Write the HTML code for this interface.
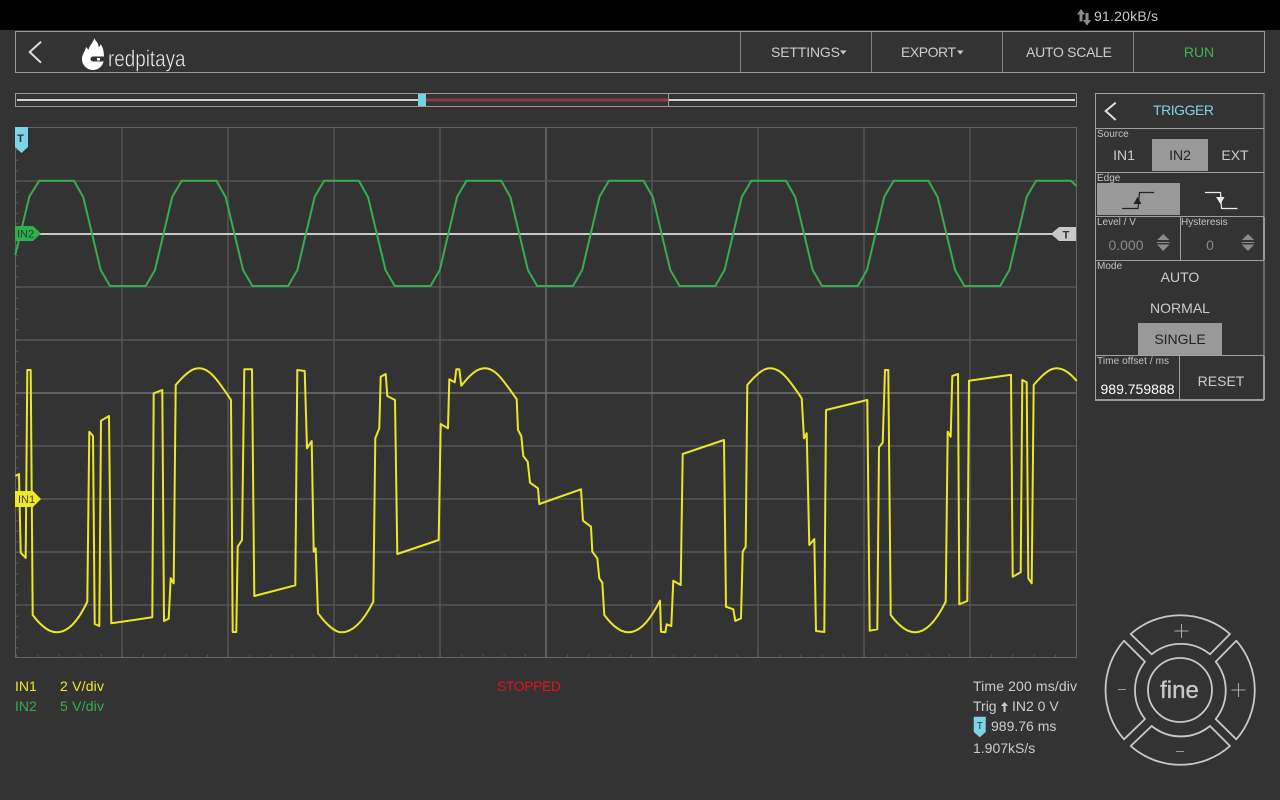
<!DOCTYPE html>
<html><head><meta charset="utf-8"><title>Oscilloscope</title>
<style>
html,body{margin:0;padding:0;background:#333;width:1280px;height:800px;overflow:hidden}
svg{display:block;font-family:"Liberation Sans",sans-serif}
text{fill:#ccc;font-size:14px}
.c{text-anchor:middle}
.l{font-size:10px;fill:#c4c4c4}
</style></head><body>
<svg width="1280" height="800" viewBox="0 0 1280 800" xmlns="http://www.w3.org/2000/svg">
<rect width="1280" height="800" fill="#333"/>
<rect width="1280" height="30" fill="#000"/>
<!-- status -->
<path d="M1081 9l4 5.500h-2.500v7h-3v-7h-2.500z" fill="#8c8c8c"/><path d="M1087 25.500l4-5.500h-2.500v-7h-3v7h-2.500z" fill="#8c8c8c"/>
<text x="1094" y="21" textLength="64" style="fill:#c8c8c8">91.20kB/s</text>
<!-- header -->
<rect x="15.500" y="31.500" width="1249" height="41" fill="none" stroke="#999"/>
<path d="M740.500 32v40M871.500 32v40M1002.500 32v40M1133.500 32v40" stroke="#808080"/>
<path d="M41 41.700L29.700 52 41 62.700" fill="none" stroke="#ddd" stroke-width="2"/>
<path d="M94.500 38C95 41 99 43 98.500 47C100 46.500 100.500 45 100.500 44C103 47 104 52 104 57C104.500 65 99 70 93 70C87 70 82 65 82 59C82 54 85 52 86 47C87 48 88 49 88.500 50C89 46 93 43 94.500 38Z" fill="#fff"/>
<path d="M93 56.500h12v5h-12a2.500 2.500 0 0 1 0-5z" fill="#333"/><rect x="97" y="58" width="3" height="2.500" fill="#fff"/>
<text transform="translate(108 66.700) scale(.82 1)" x="0" y="0" style="font-size:23px;fill:#eee;stroke:#333;stroke-width:.5px">redpitaya</text>
<text x="771" y="57" textLength="69">SETTINGS</text><path d="M840 50.500h6.500l-3.250 4z" fill="#ccc"/>
<text x="901" y="57" textLength="55">EXPORT</text><path d="M957 50.500h6.500l-3.250 4z" fill="#ccc"/>
<text x="1026" y="57" textLength="86">AUTO SCALE</text>
<text x="1199" y="57" class="c" style="fill:#3fb55a">RUN</text>
<!-- buffer bar -->
<rect x="15.500" y="93.500" width="1061" height="13" fill="none" stroke="#999"/>
<rect x="17" y="99" width="1058" height="2" fill="#d0d0d0"/>
<rect x="426" y="98.500" width="242" height="3" fill="#8d3a40"/>
<rect x="668" y="94" width="1" height="12" fill="#999"/>
<rect x="418" y="94" width="8" height="12" fill="#78d2e6"/>
<!-- plot grid -->
<g fill="none">
<path d="M122 128v530M228 128v530M334 128v530M440 128v530M652 128v530M758 128v530M864 128v530M970 128v530" stroke="#555" stroke-width="1.500"/>
<path d="M546 128v530" stroke="#707070" stroke-width="1.500"/>
<path d="M15 181h1062M15 287h1062M15 340h1062M15 446h1062M15 499h1062M15 552h1062M15 605h1062" stroke="#555" stroke-width="1.500"/>
<path d="M15 393h1062" stroke="#707070" stroke-width="1.500"/>
<rect x="15.500" y="127.500" width="1061" height="530" stroke="#666"/>
<path d="M17 128V658" stroke="#5a5a5a" stroke-width="3" stroke-dasharray="1 9.600"/>
<path d="M16 656H1076" stroke="#5a5a5a" stroke-width="3" stroke-dasharray="1 20.200"/>
</g>
<!-- trigger line -->
<rect x="38" y="233" width="1016" height="2" fill="#c8c8c8"/>
<!-- green -->
<polyline fill="none" stroke="#37ad52" stroke-width="2" stroke-linejoin="round" points="15.300,255 29.300,196.700 39.300,180.700 74,180.700 83.300,197.300 100.700,270 110,286 145.700,286 155,270 172.300,196.700 181.700,180.700 216.400,180.700 225.700,197.300 243.100,270 252.400,286 288.100,286 297.400,270 314.700,196.700 324.100,180.700 358.800,180.700 368.100,197.300 385.500,270 394.800,286 430.500,286 439.800,270 457.100,196.700 466.500,180.700 501.200,180.700 510.500,197.300 527.900,270 537.200,286 572.900,286 582.200,270 599.500,196.700 608.900,180.700 643.600,180.700 652.900,197.300 670.300,270 679.600,286 715.300,286 724.600,270 741.900,196.700 751.300,180.700 786,180.700 795.300,197.300 812.700,270 822,286 857.700,286 867,270 884.300,196.700 893.700,180.700 928.400,180.700 937.700,197.300 955.100,270 964.400,286 1000.100,286 1009.400,270 1026.700,196.700 1036.100,180.700 1070.800,180.700 1076.500,186"/>
<!-- yellow -->
<path fill="none" stroke="#ece726" stroke-width="2" stroke-linejoin="round" d="M15.500 476L19 474 20.700 552.700 25.700 558 27.300 370 30.700 370 32.700 615C41.700 627 49.700 632.300 56.700 632.300C68.700 632.300 78.700 620 87.300 601.700L89.300 431.700 93 436 94.700 624 99.300 626 101 420.700 109 416 111.300 623.300 152.300 617.300 153.700 393.300 162.300 390 164 621 168.700 618.700 170.700 578.300 173.700 583.300 175.700 385C186.700 372 192.700 368.300 199 368.300C209.700 368.300 217.700 380 231 400L232.700 632 236.300 632 237.700 546.700 242 540 244.300 369.300 252 369.300 254.300 596 295.300 585.300 297.300 370 304.700 371 307 448.300 311.700 441 313.700 551.700 315.700 548.300 318 613.300C327 625 334.700 632.300 341.700 632.300C353.700 632.300 364 620 373.300 601.700L375.300 438.300 379.300 428.300 380.700 376.700 385.700 374 387.300 396 395 400 397.300 554 438.700 540 440.700 424 448 428.300 449.300 379.300 454.700 382.300 456.300 369.300 459.300 369.300 461.300 385.700C472.300 372 478.300 368.300 485 368.300C495.300 368.300 503.300 380 516.700 399.300L518 430 521.300 436 523.300 456 527.700 461.700 530 482.700 538 488.300 539.300 504 581 489.300 583 520.700 591 526.700 592.300 551.700 597.300 558.300 599.300 578.300 602.300 582.700 604.300 615C613.300 627 621.300 632.300 628.300 632.300C640.300 632.300 650 620 660 600.700L661 631.700 665.300 632.300 666.700 624.300 671.300 626 673.300 580.700 680.700 585 682.700 454 724 440 726 606.700 733.300 609.300 735.300 621 741 618.300 742.700 551.700 745.700 546.700 747.300 385C758.300 372 764.300 368.300 770 368.300C781.300 368.300 789.300 380 801.700 398.300L804 438.300 806.700 433.300 809.300 545 814.300 539 816 631 824.300 632 826 410 867.300 400 869.700 630.700 877.300 629.300 879 447.300 882.700 442.700 885 370 888.300 370 890.700 615C899.700 627 907.700 632.300 915 632.300C926.700 632.300 936.700 620 945.700 601.700L947.700 431.700 950.700 436.700 952.300 376 958 374 959.300 604.300 967.300 601 969 380.700 1011 374.700 1012.700 576.700 1020.700 572.300 1022.300 380 1026.700 382.300 1028.300 578.300 1031.700 583.300 1033.700 385C1044.700 372 1050.700 368.300 1056.700 368.300C1063 368.300 1070 373 1076.700 381"/>
<!-- markers -->
<path d="M15 127h13v20l-6.500 6-6.500-6z" fill="#7fd3e6"/>
<text x="20.500" y="142" class="c" style="font-size:11px;font-weight:bold;fill:#234">T</text>
<path d="M15 226h18l8 7.500-8 7.500h-18z" fill="#2fb04c"/>
<text x="17" y="237.500" style="font-size:11px;fill:#143">IN2</text>
<path d="M15 491h18l8 8-8 8h-18z" fill="#efe82a"/>
<text x="18" y="503" style="font-size:11px;fill:#443">IN1</text>
<path d="M1076 227v14h-17l-8-7 8-7z" fill="#c8c8c8"/>
<text x="1066" y="238.500" class="c" style="font-size:11px;font-weight:bold;fill:#333">T</text>
<!-- trigger panel -->
<g fill="none" stroke="#a0a0a0">
<rect x="1095.500" y="93.500" width="168.500" height="306"/>
<path d="M1096 128.500h168M1096 172.500h168M1096 216.500h168M1096 260.500h168M1096 355.500h168M1180.500 217v43M1179.500 356v44"/>
<path d="M1095 400h169M1264 217v43M1264 356v44" stroke-width="2" stroke="#999"/>
</g>
<path d="M1115.700 102.700L1105.700 111l10 9" fill="none" stroke="#ddd" stroke-width="2"/>
<text x="1153" y="115" textLength="61" style="fill:#7fd3e6">TRIGGER</text>
<text x="1097" y="137" class="l">Source</text>
<rect x="1152" y="139" width="56" height="32" fill="#999"/>
<text x="1124" y="160" class="c">IN1</text>
<text x="1180" y="160" class="c" style="fill:#222">IN2</text>
<text x="1235" y="160" class="c">EXT</text>
<text x="1097" y="181" class="l">Edge</text>
<rect x="1097" y="183" width="83" height="32" fill="#999"/>
<path d="M1122 208.500h16l1.500-16h14.500" fill="none" stroke="#222" stroke-width="1.200"/>
<path d="M1137.500 197l4 7h-8z" fill="#222"/>
<path d="M1205 192.500h15.500l1 16h16" fill="none" stroke="#eee" stroke-width="1.200"/>
<path d="M1220.500 204l-4.500-7h8.500z" fill="#eee"/>
<text x="1097" y="225" class="l">Level / V</text>
<text x="1181" y="225" class="l">Hysteresis</text>
<text x="1126" y="250" class="c" style="fill:#8a8a8a">0.000</text>
<text x="1210" y="250" class="c" style="fill:#8a8a8a">0</text>
<path d="M1163.300 234l6.200 6h-12.400zM1157 242h12.500v1h-12.500zM1157 244.500h12.500l-6.200 6.500z" fill="#8a8a8a"/>
<path d="M1248 234l6.200 6h-12.400zM1241.700 242h12.500v1h-12.500zM1241.700 244.500h12.500l-6.200 6.500z" fill="#8a8a8a"/>
<text x="1097" y="269" class="l">Mode</text>
<text x="1180" y="282" class="c">AUTO</text>
<text x="1180" y="313" class="c">NORMAL</text>
<rect x="1138" y="323" width="84" height="32" fill="#999"/>
<text x="1180" y="344" class="c" style="fill:#222">SINGLE</text>
<text x="1097" y="364" textLength="72" class="l">Time offset / ms</text>
<text x="1100.500" y="394" textLength="74" style="fill:#fff">989.759888</text>
<text x="1221" y="386" class="c">RESET</text>
<!-- footer -->
<text x="15" y="691" style="fill:#efe82a">IN1</text><text x="60" y="691" textLength="44" style="fill:#efe82a">2 V/div</text>
<text x="15" y="711" style="fill:#37ad52">IN2</text><text x="60" y="711" textLength="44" style="fill:#37ad52">5 V/div</text>
<text x="497" y="691" textLength="64" style="fill:#e0141a">STOPPED</text>
<text x="973" y="691" textLength="104">Time 200 ms/div</text>
<text x="973" y="711">Trig</text>
<path d="M1004.500 702l3.500 4h-2.500v6h-2v-6h-2.500z" fill="#ccc"/>
<text x="1012" y="711">IN2 0 V</text>
<path d="M974 717h11.500v15l-5.750 5-5.750-5z" fill="#7fd3e6" stroke="#7fd3e6" stroke-width=".5"/>
<text x="979.800" y="729" class="c" style="font-size:10px;fill:#234">T</text>
<text x="991" y="731">989.76 ms</text>
<text x="973" y="753">1.907kS/s</text>
<!-- dial -->
<g fill="none" stroke="#c8c8c8" stroke-width="1.800" stroke-linejoin="round">
<circle cx="1180" cy="690" r="32"/>
<path d="M1130.700 634A75 75 0 0 1 1230 634L1210 654.300A46 46 0 0 0 1151.700 654.300Z"/>
<path d="M1130.700 746A75 75 0 0 0 1230 746L1210 726A46 46 0 0 1 1151.700 726Z"/>
<path d="M1124 640.700A75 75 0 0 0 1124 739.300L1145 719A46 46 0 0 1 1145 661.700Z"/>
<path d="M1236.300 640.700A75 75 0 0 1 1236.300 739.300L1215.700 719A46 46 0 0 0 1215.700 661.700Z"/>
</g>
<path d="M1181.500 624v14M1174.500 631h14M1238.500 683v14M1231.500 690h14" stroke="#aaa" fill="none"/>
<path d="M1118 689.500h8M1176 751.500h8" stroke="#999" fill="none"/>
<text x="1179.500" y="698" class="c" style="font-size:24px;fill:#c8c8c8;stroke:#c8c8c8;stroke-width:.35px">fine</text>
</svg>
</body></html>
